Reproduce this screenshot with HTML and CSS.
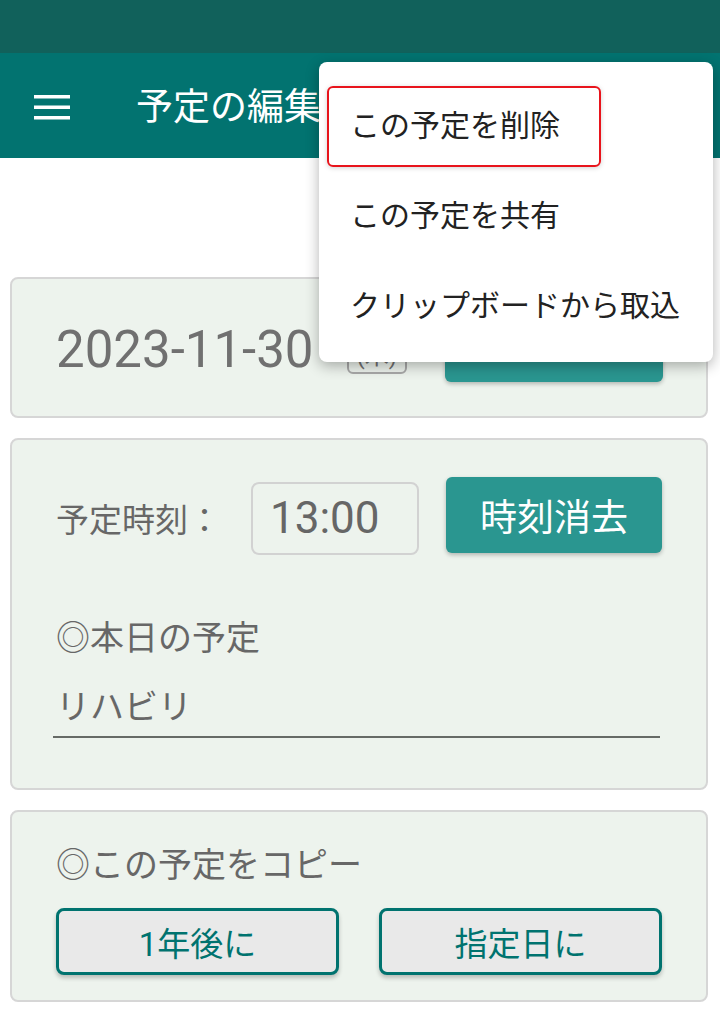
FILE: index.html
```html
<!DOCTYPE html>
<html lang="ja">
<head>
    <meta name="viewport" content="width=device-width, initial-scale=1">
    <title>予定の編集</title>
    <link rel="stylesheet" href="styles.css">
</head>
<body>
    <div class="status-bar"></div>
    <header class="app-bar">
        <button class="menu-btn" aria-label="menu">
            <svg width="36" height="26" viewBox="0 0 36 26">
                <rect x="0" y="1" width="36" height="3.5" fill="#fff"/>
                <rect x="0" y="11.5" width="36" height="3.5" fill="#fff"/>
                <rect x="0" y="22" width="36" height="3.5" fill="#fff"/>
            </svg>
        </button>
        <h1 class="title">予定の編集</h1>
    </header>

    <main class="content">
        <section class="card date-card">
            <span class="date">2023-11-30</span>
            <span class="weekday">(木)</span>
            <button class="teal-btn">日付変更</button>
        </section>

        <section class="card plan-card">
            <div class="time-row">
                <span class="label">予定時刻：</span>
                <div class="time-box">13:00</div>
                <button class="teal-btn">時刻消去</button>
            </div>
            <div class="section-label">◎本日の予定</div>
            <div class="plan-input">リハビリ</div>
        </section>

        <section class="card copy-card">
            <div class="section-label">◎この予定をコピー</div>
            <div class="copy-buttons">
                <button class="outline-btn">1年後に</button>
                <button class="outline-btn">指定日に</button>
            </div>
        </section>
    </main>

    <!-- overflow menu -->
    <div class="popup-menu">
        <div class="menu-item focused">この予定を削除</div>
        <div class="menu-item">この予定を共有</div>
        <div class="menu-item">クリップボードから取込</div>
    </div>
</body>
</html>
```

FILE: styles.css
```css
body {
    margin: 0;
    background-color: #ffffff;
    font-family: Roboto, "Noto Sans CJK JP", sans-serif;
    position: relative;
}

button {
    font-family: inherit;
    cursor: pointer;
}

.status-bar {
    height: 53px;
    background-color: #11615b;
}

.app-bar {
    height: 105px;
    background-color: #027370;
    display: flex;
    align-items: center;
    padding-left: 34px;
}

.menu-btn {
    background: none;
    border: none;
    padding: 0;
    width: 36px;
    height: 26px;
    display: flex;
    margin-top: 2px;
}

.title {
    margin: 4px 0 0 66px;
    color: #ffffff;
    font-size: 37px;
    font-weight: normal;
    line-height: 1;
}

.content {
    padding: 119px 12px 0 10px;
    display: flex;
    flex-direction: column;
    gap: 20px;
}

.card {
    background-color: #edf3ed;
    border: 2px solid #d6d6d6;
    border-radius: 8px;
}

.teal-btn {
    background-color: #2a9690;
    color: #ffffff;
    border: none;
    border-radius: 6px;
    font-size: 37px;
    width: 216px;
    height: 76px;
    flex-shrink: 0;
    box-shadow: 0 2px 4px rgba(0, 0, 0, 0.25);
}

/* date card */
.date-card {
    height: 137px;
    display: flex;
    align-items: center;
    padding: 0 43px 0 44px;
}

.date {
    font-size: 51px;
    color: #707070;
    margin-top: 4px;
}

.weekday {
    margin-left: 33px;
    margin-top: 16px;
    height: 32px;
    padding: 0 8px;
    border: 2px solid #a8a8a8;
    border-radius: 6px;
    font-size: 24px;
    line-height: 32px;
    color: #707070;
}

.date-card .teal-btn {
    margin-left: auto;
    margin-bottom: 8px;
    padding-bottom: 16px;
    width: 218px;
}

/* plan card */
.plan-card {
    padding: 36px 46px 50px 44px;
}

.time-row {
    display: flex;
    align-items: center;
    height: 78px;
}

.label {
    font-size: 33px;
    color: #676767;
    margin-top: 6px;
    white-space: nowrap;
    flex-shrink: 0;
}

.time-box {
    margin-left: 30px;
    width: 147px;
    height: 69px;
    padding-left: 17px;
    border: 2px solid #d2d2d2;
    border-radius: 8px;
    font-size: 44px;
    line-height: 69px;
    color: #666666;
    margin-top: 7px;
    flex-shrink: 0;
}

.time-row .teal-btn {
    margin-left: 27px;
}

.section-label {
    font-size: 34px;
    line-height: 44px;
    color: #676767;
}

.plan-card .section-label {
    margin-top: 62px;
}

.plan-input {
    margin: 25px 0 0 -3px;
    padding: 0 0 7px 3px;
    font-size: 34px;
    line-height: 44px;
    color: #676767;
    border-bottom: 2px solid #666a66;
}

/* copy card */
.copy-card {
    padding: 31px 44px 25px 44px;
}

.copy-buttons {
    display: grid;
    grid-template-columns: 1fr 1fr;
    gap: 40px;
    margin-top: 21px;
}

.outline-btn {
    height: 67px;
    background-color: #e9e9e9;
    border: 3px solid #00736f;
    border-radius: 8px;
    color: #00736f;
    font-size: 33px;
    box-shadow: 0 3px 4px rgba(0, 0, 0, 0.22);
}

/* popup */
.popup-menu {
    position: absolute;
    top: 62px;
    left: 319px;
    width: 394px;
    height: 300px;
    box-sizing: border-box;
    padding: 16px 0 14px;
    background-color: #ffffff;
    border-radius: 8px;
    box-shadow: 0 4px 14px rgba(0, 0, 0, 0.3);
}

.menu-item {
    position: relative;
    height: 90px;
    display: flex;
    align-items: center;
    padding-left: 31px;
    font-size: 30px;
    color: #222222;
}

.menu-item.focused::before {
    content: "";
    position: absolute;
    left: 8px;
    top: 8px;
    width: 270px;
    height: 77px;
    border: 2px solid #e8141c;
    border-radius: 6px;
    box-shadow: 0 1px 5px rgba(0, 0, 0, 0.18);
}
```
